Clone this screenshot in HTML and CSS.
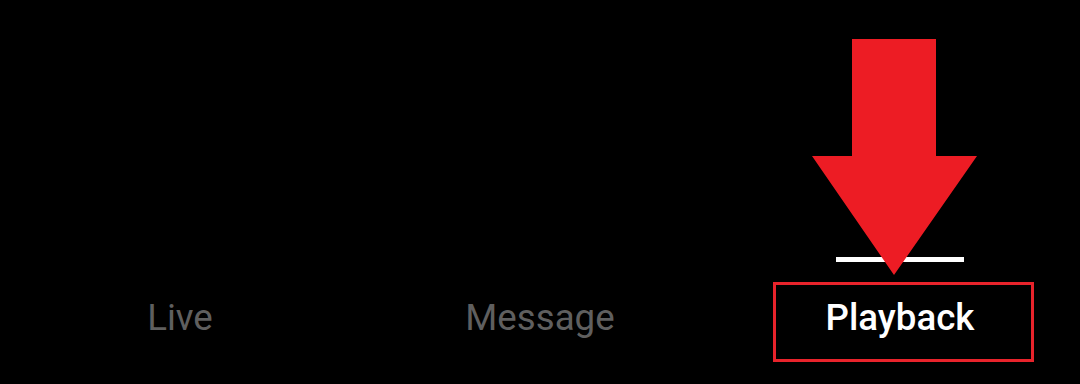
FILE: index.html
```html
<!DOCTYPE html>
<html>
<head>
<meta charset="utf-8">
<link rel="stylesheet" href="styles.css">
</head>
<body>
<div class="screen">
  <nav class="tabs">
    <div class="tab">
      <span class="indicator"></span>
      <span class="label">Live</span>
    </div>
    <div class="tab">
      <span class="indicator"></span>
      <span class="label">Message</span>
    </div>
    <div class="tab active">
      <span class="indicator"></span>
      <span class="label">Playback</span>
    </div>
  </nav>
  <div class="highlight-box"></div>
  <svg class="arrow" width="1080" height="384" viewBox="0 0 1080 384">
    <polygon points="852,39 936,39 936,156 977,156 894,275 812,156 852,156" fill="#ed1c24"/>
  </svg>
</div>
</body>
</html>
```

FILE: styles.css
```css
html, body {
  margin: 0;
  padding: 0;
  background: #000;
}
.screen {
  position: relative;
  width: 1080px;
  height: 384px;
  overflow: hidden;
  background: #000;
  font-family: Roboto, "Liberation Sans", sans-serif;
}
.tabs {
  display: grid;
  grid-template-columns: repeat(3, 1fr);
  padding-top: 257px;
}
.tab {
  display: flex;
  flex-direction: column;
  align-items: center;
}
.indicator {
  display: block;
  width: 128px;
  height: 5px;
  background: transparent;
}
.tab.active .indicator {
  background: #ffffff;
}
.label {
  margin-top: 34px;
  font-size: 36.7px;
  line-height: 43px;
  color: #5f5f5f;
  font-weight: 400;
}
.tab.active .label {
  color: #ffffff;
  font-weight: 500;
}
.highlight-box {
  position: absolute;
  left: 773px;
  top: 282px;
  width: 255px;
  height: 74px;
  border: 3px solid #e8232b;
}
.arrow {
  position: absolute;
  left: 0;
  top: 0;
}
```
